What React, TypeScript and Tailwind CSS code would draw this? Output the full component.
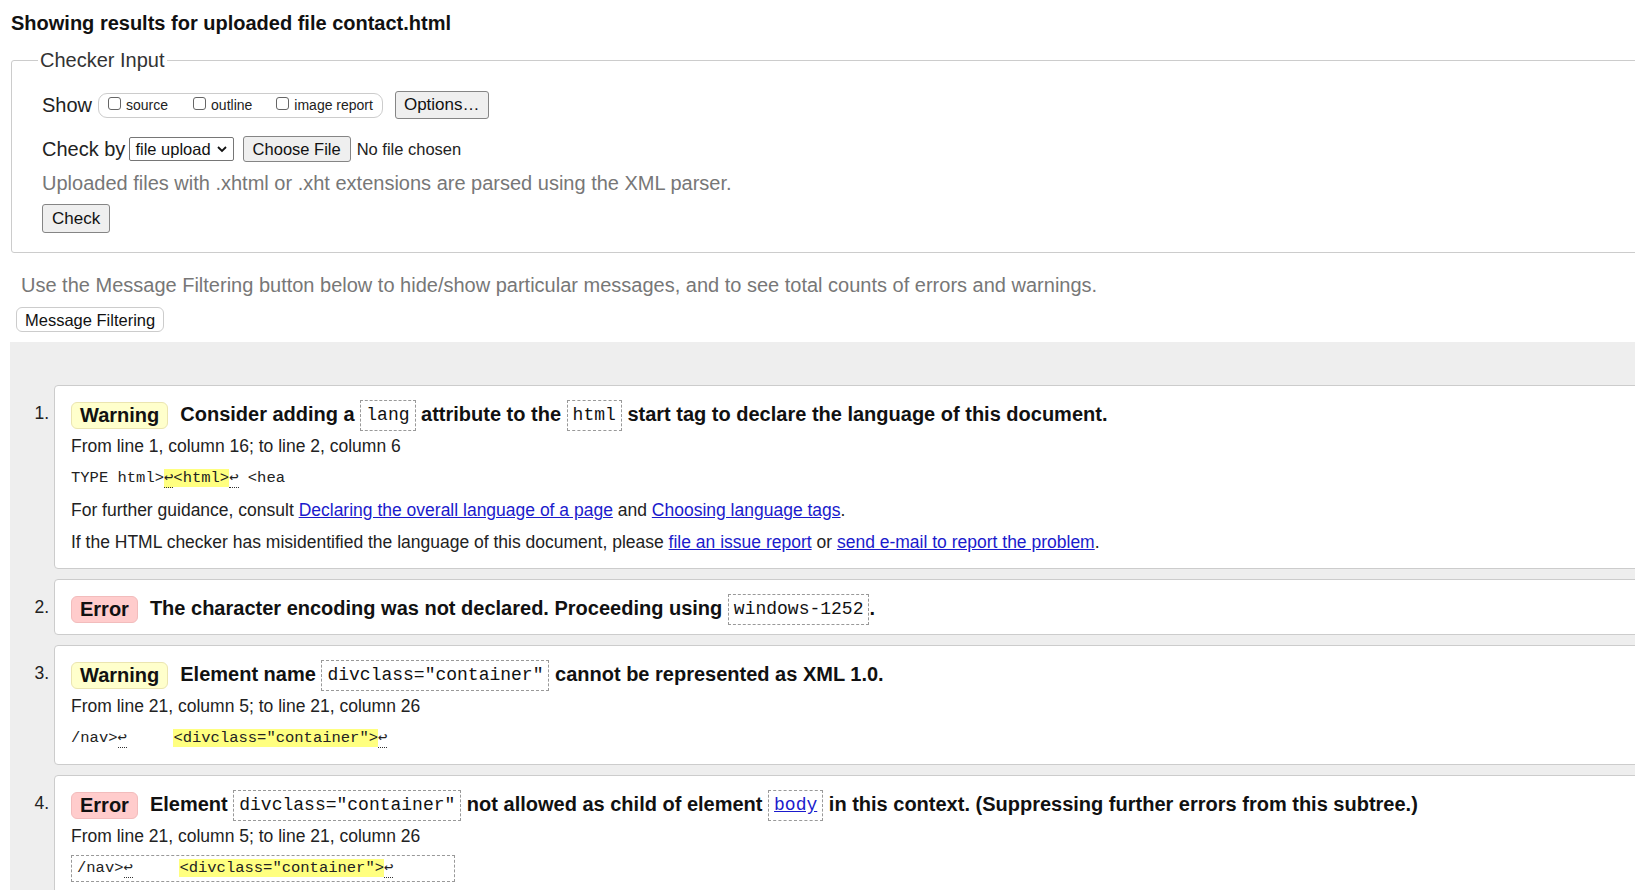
import React from 'react';

const Code = ({ children }: { children: React.ReactNode }) => (
  <code className="inline-block align-middle border border-dashed border-[#999] px-[5px] leading-[29px] font-['Liberation_Mono',monospace] text-[18px] font-normal text-[#111]">
    {children}
  </code>
);

const Badge = ({ kind }: { kind: 'Warning' | 'Error' }) => (
  <span
    className={
      kind === 'Warning'
        ? 'inline-block align-middle mr-[12px] rounded-[6px] border border-[#ebe5b0] bg-[#ffffcc] px-[8px] leading-[25px]'
        : 'inline-block align-middle mr-[12px] rounded-[6px] border border-[#f2bcbc] bg-[#ffcccc] px-[8px] leading-[25px]'
    }
  >
    {kind}
  </span>
);

const Lf = ({ hl }: { hl?: boolean }) => (
  <span className={hl ? 'bg-[#ffff80] border-b border-dotted border-[#333]' : 'border-b border-dotted border-[#333]'}>↩</span>
);

const Box = ({ n, children }: { n: number; children: React.ReactNode }) => (
  <li className="flex mb-[10px]">
    <div className="w-[39px] mt-[12px] text-right leading-[32px] text-[17.5px] text-[#222]">{n}.</div>
    <div className="ml-[5px] flex-1 border border-[#ccc] rounded-[4px] bg-white pl-[16px] pt-[12px] pb-[10px]">{children}</div>
  </li>
);

const Headline = ({ children }: { children: React.ReactNode }) => (
  <div className="h-[32px] text-[20px] font-bold leading-[32px] whitespace-nowrap text-[#111]">{children}</div>
);

const Line = ({ children }: { children: React.ReactNode }) => (
  <p className="h-[32px] text-[17.5px] leading-[32px] whitespace-nowrap text-[#222]">{children}</p>
);

const Extract = ({ children }: { children: React.ReactNode }) => (
  <p className="h-[32px] leading-[32px] whitespace-pre font-['Liberation_Mono',monospace] text-[15.5px] text-[#222]">{children}</p>
);

const A = ({ children }: { children: React.ReactNode }) => (
  <a href="#" className="text-[#1a1acc] underline">{children}</a>
);

const Checkbox = () => (
  <span className="inline-block w-[13px] h-[13px] mb-[6px] mr-[5px] border border-[#666] rounded-[3px] bg-white" />
);

export default function App() {
  return (
    <div className="w-[1635px] h-[890px] overflow-hidden bg-white text-black font-['Liberation_Sans',Arial,sans-serif]">
      <div className="w-[1720px]">
        <h2 className="ml-[11px] pt-[11px] text-[20px] font-bold leading-[24px] text-[#111]">
          Showing results for uploaded file contact.html
        </h2>

        <fieldset className="ml-[11px] mt-[14px] w-[1700px] border border-[#ccc] rounded-[3px] pl-[30px] pb-[19px]">
          <legend className="-ml-[4px] px-[2px] text-[20px] leading-[23px] text-[#333]">Checker Input</legend>

          <div className="mt-[19px] flex items-center h-[28px]">
            <span className="text-[20px] text-[#222] mr-[6px]">Show</span>
            <div className="flex items-end h-[25px] border border-[#ccc] rounded-[9px] pl-[9px] pr-[9px] pb-[1px] text-[14px] text-[#222]">
              <label className="flex items-end"><Checkbox />source</label>
              <label className="flex items-end ml-[25px]"><Checkbox />outline</label>
              <label className="flex items-end ml-[24px]"><Checkbox />image report</label>
            </div>
            <button className="ml-[12px] h-[28px] px-[8px] border border-[#858585] rounded-[3px] bg-[#efefef] text-[17px] text-[#111]">
              Options…
            </button>
          </div>

          <div className="mt-[17px] flex items-center h-[26px]">
            <span className="text-[20px] text-[#222]">Check by</span>
            <div className="ml-[4px] flex items-center h-[24px] border border-[#767676] rounded-[2px] bg-white pl-[5px] pr-[5px] text-[16.5px] text-[#111]">
              file upload
              <svg width="12" height="12" viewBox="0 0 12 12" className="ml-[5px]">
                <polyline points="2,4 6,8 10,4" fill="none" stroke="#111" strokeWidth="1.8" />
              </svg>
            </div>
            <button className="ml-[9px] h-[26px] px-[9px] border border-[#858585] rounded-[3px] bg-[#efefef] text-[16.5px] text-[#111]">
              Choose File
            </button>
            <span className="ml-[6px] text-[16.5px] text-[#222]">No file chosen</span>
          </div>

          <p className="mt-[9px] text-[20px] leading-[24px] text-[#777]">
            Uploaded files with .xhtml or .xht extensions are parsed using the XML parser.
          </p>

          <button className="mt-[9px] h-[29px] px-[9px] border border-[#858585] rounded-[3px] bg-[#efefef] text-[17px] text-[#111]">
            Check
          </button>
        </fieldset>

        <p className="ml-[21px] mt-[20px] text-[20px] leading-[24px] text-[#777]">
          Use the Message Filtering button below to hide/show particular messages, and to see total counts of errors and warnings.
        </p>
        <button className="ml-[16px] mt-[10px] h-[25px] px-[8px] border border-[#ccc] rounded-[6px] bg-white text-[16.5px] text-[#111]">
          Message Filtering
        </button>

        <div className="ml-[10px] mt-[9px] h-[600px] bg-[#eee] pt-[43px]">
          <ol>
            <Box n={1}>
              <Headline>
                <Badge kind="Warning" />
                Consider adding a <Code>lang</Code> attribute to the <Code>html</Code> start tag to declare the language of this document.
              </Headline>
              <Line>From line 1, column 16; to line 2, column 6</Line>
              <Extract>
                TYPE html&gt;<Lf hl /><span className="bg-[#ffff80]">&lt;html&gt;</span><Lf /> &lt;hea
              </Extract>
              <Line>
                For further guidance, consult <A>Declaring the overall language of a page</A> and <A>Choosing language tags</A>.
              </Line>
              <Line>
                If the HTML checker has misidentified the language of this document, please <A>file an issue report</A> or{' '}
                <A>send e-mail to report the problem</A>.
              </Line>
            </Box>

            <Box n={2}>
              <Headline>
                <Badge kind="Error" />
                The character encoding was not declared. Proceeding using <Code>windows-1252</Code>.
              </Headline>
            </Box>

            <Box n={3}>
              <Headline>
                <Badge kind="Warning" />
                Element name <Code>divclass="container"</Code> cannot be represented as XML 1.0.
              </Headline>
              <Line>From line 21, column 5; to line 21, column 26</Line>
              <Extract>
                /nav&gt;<Lf />{'     '}<span className="bg-[#ffff80]">&lt;divclass="container"&gt;</span><Lf />
              </Extract>
            </Box>

            <Box n={4}>
              <Headline>
                <Badge kind="Error" />
                Element <Code>divclass="container"</Code> not allowed as child of element{' '}
                <Code><A>body</A></Code> in this context. (Suppressing further errors from this subtree.)
              </Headline>
              <Line>From line 21, column 5; to line 21, column 26</Line>
              <Extract>
                <span className="inline-block border border-dashed border-[#999] px-[5px] leading-[25px]">
                  /nav&gt;<Lf />{'     '}<span className="bg-[#ffff80]">&lt;divclass="container"&gt;</span><Lf />{'      '}
                </span>
              </Extract>
            </Box>
          </ol>
        </div>
      </div>
    </div>
  );
}
